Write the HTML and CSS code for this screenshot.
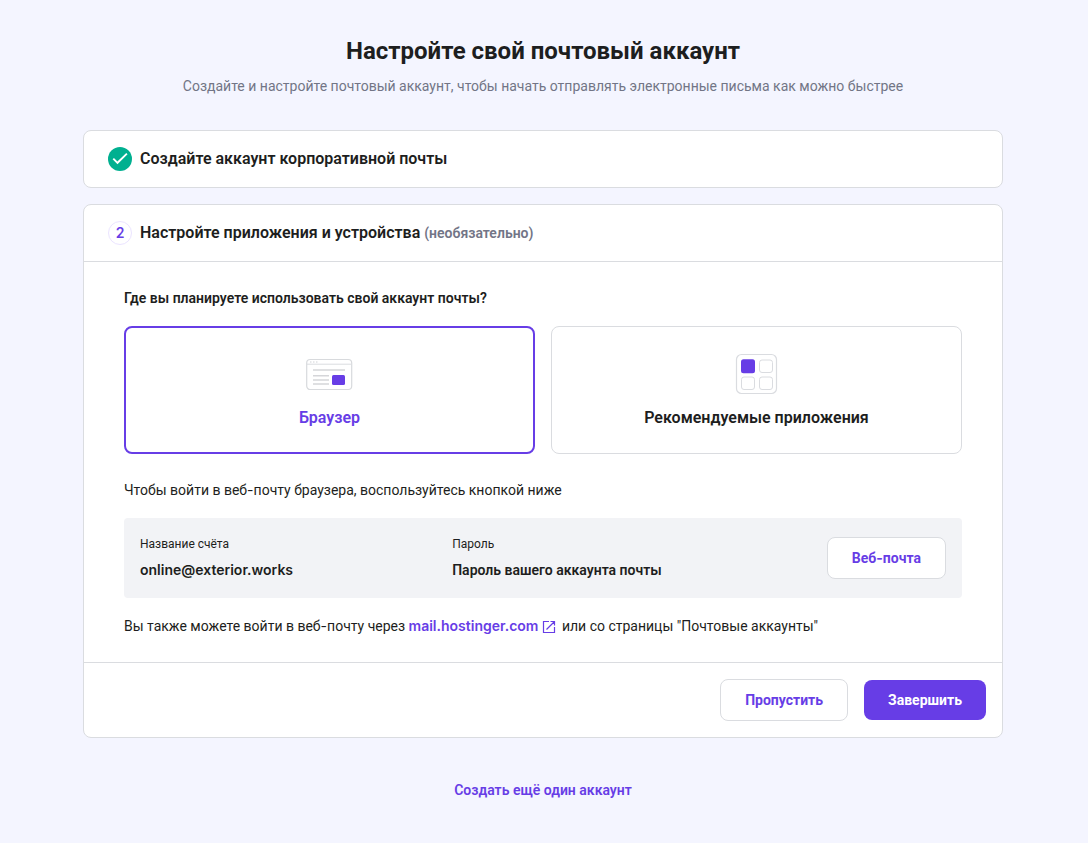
FILE: index.html
```html
<!DOCTYPE html>
<html lang="ru">
<head>
<meta charset="utf-8">
<meta name="viewport" content="width=device-width, initial-scale=1">
<title>Настройте свой почтовый аккаунт</title>
<link rel="stylesheet" href="styles.css">
</head>
<body>
<main class="page">
  <header class="intro">
    <h1 class="title">Настройте свой почтовый аккаунт</h1>
    <p class="subtitle">Создайте и настройте почтовый аккаунт, чтобы начать отправлять электронные письма как можно быстрее</p>
  </header>

  <section class="card">
    <div class="step">
      <svg class="step-icon" viewBox="0 0 24 24" aria-hidden="true"><circle cx="12" cy="12" r="12" fill="#00b090"/><path d="M5.3 11.600l4.200 4.200L18.900 6.600" fill="none" stroke="#fff" stroke-width="1.900"/></svg>
      <h2 class="step-title">Создайте аккаунт корпоративной почты</h2>
    </div>
  </section>

  <section class="card">
    <div class="step step-open">
      <span class="step-number">2</span>
      <h2 class="step-title">Настройте приложения и устройства <span class="optional">(необязательно)</span></h2>
    </div>

    <div class="body">
      <h3 class="question" id="question">Где вы планируете использовать свой аккаунт почты?</h3>
      <div class="options" role="radiogroup" aria-labelledby="question">
        <label class="option">
          <input class="option-input" type="radio" name="place" checked>
          <svg class="option-icon" viewBox="1 -1 48 48" fill="none" aria-hidden="true">
            <rect x="1.700" y="8.500" width="45" height="30" rx="3.500" stroke="#d8dadd" stroke-width="1.200"/>
            <path d="M2 13.200h44" stroke="#dadce0"/>
            <path d="M5 11h1.500M8 11h1.500M11 11h1.500" stroke="#d0d2d6"/>
            <path d="M8 19h32M8 24.700h16M8 29h16M8 33h16" stroke="#d5d6d9" stroke-width="1.600"/>
            <rect x="27" y="24" width="13" height="10" rx="1.500" fill="#673de6"/>
          </svg>
          <span>Браузер</span>
        </label>
        <label class="option">
          <input class="option-input" type="radio" name="place">
          <svg class="option-icon" viewBox="1 -1 48 48" fill="none" aria-hidden="true">
            <g stroke="#dadce0">
              <rect x="4.500" y="3.500" width="40" height="39" rx="5" stroke-width="1.200"/>
              <rect x="27.500" y="9" width="13" height="12.500" rx="2.500"/>
              <rect x="9.500" y="26" width="13" height="12.500" rx="2.500"/>
              <rect x="27.500" y="26" width="13" height="12.500" rx="2.500"/>
            </g>
            <rect x="9" y="8.300" width="14" height="14" rx="2.500" fill="#673de6"/>
          </svg>
          <span>Рекомендуемые приложения</span>
        </label>
      </div>
      <p class="text hint">Чтобы войти в веб<span class="hyphen">-</span>почту браузера, воспользуйтесь кнопкой ниже</p>
      <div class="account">
        <dl class="field">
          <dt class="field-name">Название счёта</dt>
          <dd class="field-value latin">online@exterior.works</dd>
        </dl>
        <dl class="field">
          <dt class="field-name">Пароль</dt>
          <dd class="field-value">Пароль вашего аккаунта почты</dd>
        </dl>
        <button class="button button-outline" type="button">Веб<span class="hyphen">-</span>почта</button>
      </div>
      <p class="text">Вы также можете войти в веб<span class="hyphen">-</span>почту через <a class="link" href="#"><span class="latin">mail.hostinger.com</span><svg class="link-icon" viewBox="0 0 14 14" fill="none" stroke="currentColor" aria-hidden="true"><path d="M7 1.500H1.500v11h11V7M8.500 1.500h4v4M4.500 9.500l8-8" stroke-width="1.200"/></svg></a> или со страницы "Почтовые аккаунты"</p>
    </div>

    <footer class="actions">
      <button class="button button-outline" type="button">Пропустить</button>
      <button class="button button-primary" type="button">Завершить</button>
    </footer>
  </section>

  <a class="more" href="#">Создать ещё один аккаунт</a>
</main>
</body>
</html>
```

FILE: styles.css
```css
* {
  box-sizing: border-box;
}

body {
  margin: 0;
  background: #f4f5ff;
  color: #1d1e20;
  font: 400 14px/24px Roboto, sans-serif;
}

h1, h2, h3, p, dl, dd {
  margin: 0;
}

.page {
  display: flex;
  flex-direction: column;
  gap: 16px;
  max-width: 952px;
  margin: 0 auto;
  padding: 35px 17px 40px 15px;
}

.intro {
  margin-bottom: 16px;
  text-align: center;
}

.title {
  margin-bottom: 7px;
  font-size: 24px;
  line-height: 32px;
  font-weight: 700;
}

.subtitle {
  color: #727586;
}

.card {
  border: 1px solid #dadce0;
  border-radius: 8px;
  background: #fff;
}

.step {
  display: flex;
  align-items: center;
  gap: 8px;
  padding: 16px 24px;
}

.step-open {
  border-bottom: 1px solid #dadce0;
}

.step-icon,
.step-number {
  flex: none;
  width: 24px;
  height: 24px;
}

.step-number {
  border: 1px solid #ebe4ff;
  border-radius: 50%;
  color: #673de6;
  font: 600 14px/22px Inter, sans-serif;
  text-align: center;
}

.step-title {
  font-size: 16px;
  line-height: 24px;
  font-weight: 600;
}

.optional {
  color: #727586;
  font-size: 14px;
}

.body {
  padding: 24px 40px;
}

.question {
  margin-bottom: 16px;
  font-size: 14px;
  line-height: 24px;
  font-weight: 600;
}

.options {
  display: grid;
  grid-template-columns: 1fr 1fr;
  gap: 16px;
  margin-bottom: 24px;
}

.option {
  display: flex;
  flex-direction: column;
  align-items: center;
  gap: 8px;
  padding: 23px 16px;
  border: 1px solid #dadce0;
  border-radius: 8px;
  font-size: 16px;
  font-weight: 600;
  cursor: pointer;
}

.option:has(:checked) {
  padding: 22px 15px;
  border: 2px solid #673de6;
  color: #673de6;
}

.option-input {
  position: absolute;
  opacity: 0;
}

.option-icon {
  width: 48px;
  height: 48px;
}

.hint {
  margin-bottom: 16px;
}

.account {
  display: grid;
  grid-template-columns: 5fr 6fr auto;
  align-items: center;
  margin-bottom: 16px;
  padding: 16px;
  border-radius: 4px;
  background: #f2f3f6;
}

.field-name {
  margin-bottom: 4px;
  font-size: 12px;
  line-height: 20px;
}

.field-value {
  font-weight: 600;
}

.latin {
  font-family: Inter, sans-serif;
  font-weight: 600;
}

.hyphen {
  font-family: Inter, sans-serif;
}

.link {
  color: #673de6;
  text-decoration: none;
}

.link-icon {
  width: 14px;
  height: 14px;
  margin: 0 2px 0 4px;
  vertical-align: -3px;
}

.button {
  padding: 8px 24px;
  border: 0;
  border-radius: 8px;
  font: 700 14px/24px Roboto, sans-serif;
  cursor: pointer;
}

.button-outline {
  border: 1px solid #dadce0;
  background: #fff;
  color: #673de6;
}

.button-primary {
  background: #673de6;
  color: #fff;
}

.actions {
  display: flex;
  align-items: center;
  justify-content: flex-end;
  gap: 16px;
  padding: 16px;
  border-top: 1px solid #dadce0;
}

.more {
  align-self: center;
  margin-top: 24px;
  color: #673de6;
  font-weight: 600;
  text-decoration: none;
}
```
